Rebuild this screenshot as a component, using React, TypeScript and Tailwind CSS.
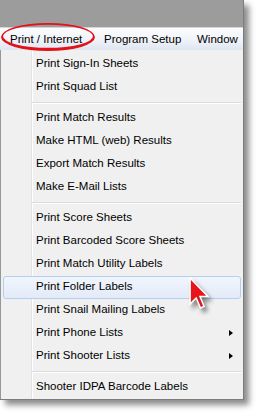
import { Fragment } from 'react'

type Entry = { label: string; sub?: boolean; active?: boolean } | 'sep'

const entries: Entry[] = [
  { label: 'Print Sign-In Sheets' },
  { label: 'Print Squad List' },
  'sep',
  { label: 'Print Match Results' },
  { label: 'Make HTML (web) Results' },
  { label: 'Export Match Results' },
  { label: 'Make E-Mail Lists' },
  'sep',
  { label: 'Print Score Sheets' },
  { label: 'Print Barcoded Score Sheets' },
  { label: 'Print Match Utility Labels' },
  { label: 'Print Folder Labels', active: true },
  { label: 'Print Snail Mailing Labels' },
  { label: 'Print Phone Lists', sub: true },
  { label: 'Print Shooter Lists', sub: true },
  'sep',
  { label: 'Shooter IDPA Barcode Labels' },
]

const SubArrow = () => (
  <span className="ml-auto mr-[10px] h-0 w-0 border-y-[3.5px] border-l-[4px] border-y-transparent border-l-black" />
)

const MenuRow = ({ label, sub, active }: { label: string; sub?: boolean; active?: boolean }) => {
  if (active) {
    return (
      <div className="mx-[2px] flex h-[23px] items-center rounded-[3px] border border-[#b4cff0] bg-[linear-gradient(to_bottom,#f1f5fc,#e3ebf8)] pl-[32px]">
        {label}
      </div>
    )
  }
  return (
    <div className="flex h-[23px] items-center pl-[35px]">
      {label}
      {sub && <SubArrow />}
    </div>
  )
}

export default function App() {
  return (
    <div className="relative h-[415px] w-[259px] overflow-hidden bg-white font-['Liberation_Sans',sans-serif] text-[11.5px] text-black">
      <div className="flex h-[400px] w-[244px] flex-col border-r border-b border-[#7c7c7c] shadow-[5px_5px_6px_rgba(0,0,0,0.45)]">
        <div className="h-[27px] bg-[#9c9c9c]" />
        <div className="h-px bg-[#d4d4d4]" />
        <div className="flex h-[22px] items-center overflow-hidden whitespace-nowrap bg-[linear-gradient(to_bottom,#fbfcfe_0%,#f1f4f9_50%,#dfe6f1_100%)] pt-px">
          <span className="w-[104px] pl-[10px]">Print / Internet</span>
          <span className="w-[93px]">Program Setup</span>
          <span>Window</span>
        </div>
        <div className="flex-1 border-l border-[#979797] bg-[linear-gradient(to_right,#f0f0f0_30px,#e2e3e3_30px,#e2e3e3_31px,#ffffff_31px,#ffffff_32px,#f0f0f0_32px)] pt-[2.5px]">
          {entries.map((e, i) =>
            e === 'sep' ? (
              <div key={i} className="flex h-[8px] flex-col justify-center pl-[31px] pr-[2px]">
                <div className="h-px bg-[#dcdcdc]" />
                <div className="h-px bg-white" />
              </div>
            ) : (
              <Fragment key={i}>
                <MenuRow {...e} />
              </Fragment>
            ),
          )}
        </div>
      </div>

      {/* red circle drawn round the menu title */}
      <svg className="absolute left-0 top-0" width="100" height="56" viewBox="0 0 100 56">
        <path
          fillRule="evenodd"
          fill="#e3121a"
          d="M1 37a47 14 0 1 0 94 0a47 14 0 1 0 -94 0Z M3 36.3a45 11.5 0 1 0 90 0a45 11.5 0 1 0 -90 0Z"
        />
      </svg>

      {/* red mouse pointer */}
      <svg
        className="absolute left-[189px] top-[277px] drop-shadow-[3px_4px_2px_rgba(0,0,0,0.45)]"
        width="20"
        height="33"
        viewBox="0 0 12 20"
      >
        <path
          d="M0.6 0.6 L0.6 16.4 L4.3 12.7 L6.9 18.8 L9.1 17.8 L6.6 11.8 L11.4 11.8 Z"
          fill="#e8141c"
          stroke="#ffffff"
          strokeWidth="0.9"
          strokeLinejoin="miter"
        />
      </svg>
    </div>
  )
}
